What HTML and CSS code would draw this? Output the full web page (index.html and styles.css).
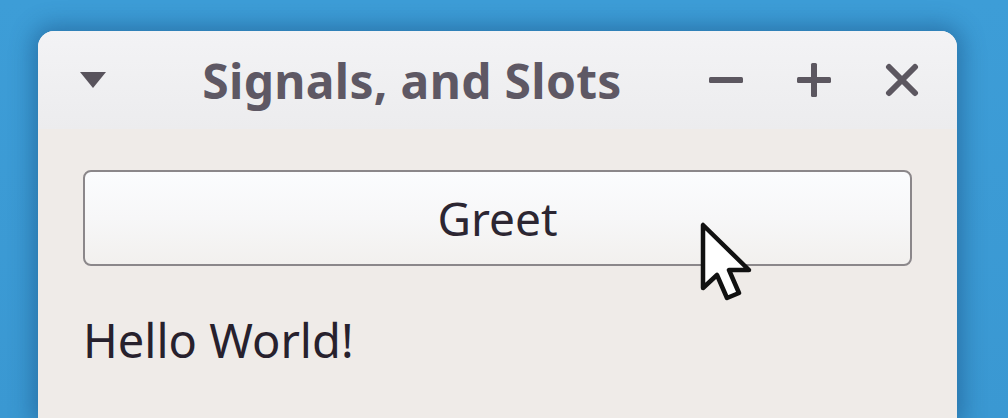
FILE: index.html
```html
<!DOCTYPE html>
<html>
<head>
<meta charset="utf-8">
<link rel="stylesheet" href="styles.css">
</head>
<body>
<div class="desktop">
  <div class="window">
    <div class="titlebar">
      <div class="menu-btn">
        <svg width="28" height="18" viewBox="0 0 28 18"><polygon points="1,1 27,1 14,17" fill="#58535c"/></svg>
      </div>
      <div class="title">Signals, and Slots</div>
      <div class="controls">
        <svg class="ctl" width="34" height="34" viewBox="0 0 34 34"><rect x="0" y="14" width="34" height="6" rx="1.5" fill="#5c5760"/></svg>
        <svg class="ctl" width="34" height="34" viewBox="0 0 34 34"><rect x="0" y="14" width="34" height="6" rx="1.5" fill="#5c5760"/><rect x="14" y="0" width="6" height="34" rx="1.5" fill="#5c5760"/></svg>
        <svg class="ctl" width="34" height="34" viewBox="0 0 34 34"><path d="M4 4 L30 30 M30 4 L4 30" stroke="#5c5760" stroke-width="6" stroke-linecap="round"/></svg>
      </div>
    </div>
    <div class="content">
      <button class="greet">Greet</button>
      <div class="label">Hello World!</div>
    </div>
  </div>
  <svg class="cursor" width="56" height="84" viewBox="0 0 56 84">
    <path d="M4 4 L4 67 L18 54 L28 77 L40 72 L30 49 L50 49 Z" fill="#ffffff" stroke="#111111" stroke-width="4.5" stroke-linejoin="round"/>
  </svg>
</div>
</body>
</html>
```
FILE: styles.css
```css
html, body {
  margin: 0;
  padding: 0;
}
body {
  width: 1008px;
  height: 418px;
  overflow: hidden;
  background: #3b9ad4;
  font-family: "Noto Sans", "Open Sans", sans-serif;
}
.desktop {
  position: relative;
  width: 1008px;
  height: 418px;
  padding: 31px 0 0 38px;
  box-sizing: border-box;
  overflow: hidden;
  background: linear-gradient(180deg, #3d9dd7 0%, #3a98d2 100%);
}
.window {
  width: 919px;
  height: 387px;
  border-radius: 16px 16px 0 0;
  background: #efebe8;
  box-shadow: 0 0 22px 6px rgba(20, 70, 120, 0.45);
  overflow: hidden;
}
.titlebar {
  height: 98px;
  display: flex;
  align-items: center;
  padding: 0 38px 0 41px;
  background: linear-gradient(180deg, #f3f3f5 0%, #ececee 100%);
  box-sizing: border-box;
}
.menu-btn {
  width: 28px;
  height: 18px;
  display: flex;
}
.title {
  flex: 1;
  text-align: center;
  padding-left: 8px;
  font-weight: 700;
  font-size: 48px;
  color: #5e5864;
  letter-spacing: 0.3px;
}
.controls {
  display: flex;
  gap: 54px;
  align-items: center;
}
.ctl {
  display: block;
}
.content {
  padding: 41px 45px 0 45px;
  background: #efebe8;
}
.greet {
  display: block;
  width: 100%;
  height: 96px;
  border: 2px solid #8b878a;
  border-radius: 8px;
  background: linear-gradient(180deg, #fbfcfe 0%, #f7f7f8 50%, #f2f0ee 100%);
  font-family: "Noto Sans", "Open Sans", sans-serif;
  font-size: 46px;
  color: #2c2632;
  padding: 0;
  margin: 0;
}
.label {
  margin-top: 44px;
  font-size: 47px;
  line-height: 60px;
  color: #27212d;
}
.cursor {
  position: absolute;
  left: 699px;
  top: 221px;
}
```
